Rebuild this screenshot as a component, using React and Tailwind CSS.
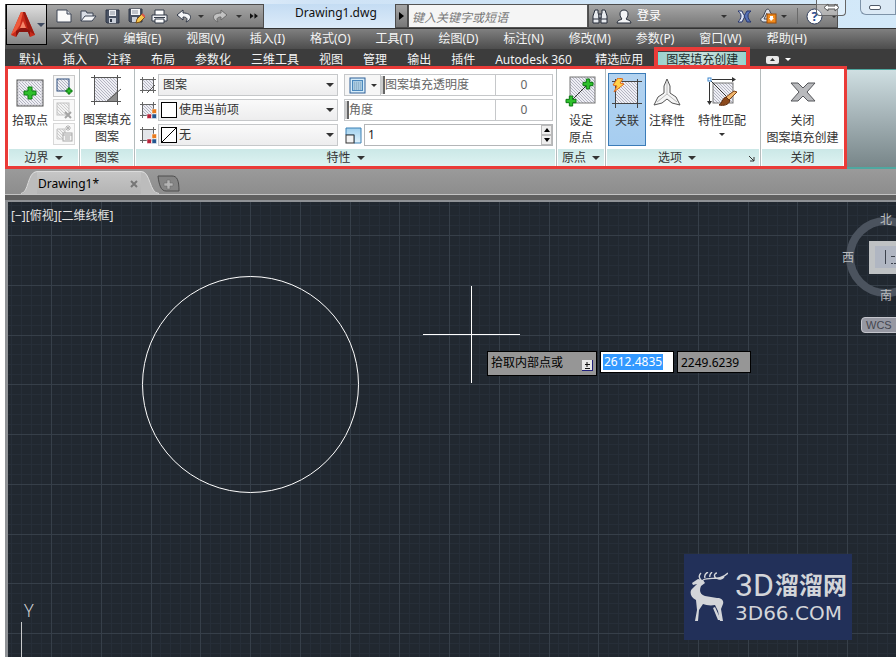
import React, { useState } from 'react';

const MENUS = [
  '文件(F)', '编辑(E)', '视图(V)', '插入(I)', '格式(O)', '工具(T)',
  '绘图(D)', '标注(N)', '修改(M)', '参数(P)', '窗口(W)', '帮助(H)',
];

const TABS = [
  '默认', '插入', '注释', '布局', '参数化', '三维工具',
  '视图', '管理', '输出', '插件', 'Autodesk 360', '精选应用',
];

// Grid spacing of the drawing area
const MAJOR = 49.75;

function Caret({ className = 'text-[#333]' }) {
  return (
    <svg width="8" height="4" viewBox="0 0 8 4" className={`shrink-0 ${className}`}>
      <path d="M0 0h8L4 4z" fill="currentColor" />
    </svg>
  );
}

function SmallCaret({ className = 'text-[#333]' }) {
  return (
    <svg width="6" height="3" viewBox="0 0 6 3" className={`shrink-0 ${className}`}>
      <path d="M0 0h6L3 3z" fill="currentColor" />
    </svg>
  );
}

function SharedDefs() {
  return (
    <svg className="absolute h-0 w-0" aria-hidden="true">
      <defs>
        <pattern id="hatch" width="3" height="3" patternUnits="userSpaceOnUse">
          <rect width="3" height="3" fill="#eeeef4" />
          <path d="M0 0l3 3M-1 2l2 2M2 -1l2 2" stroke="#9a9baa" strokeWidth="0.7" />
        </pattern>
        <pattern id="hatchLight" width="3" height="3" patternUnits="userSpaceOnUse">
          <rect width="3" height="3" fill="#f3f3f3" />
          <path d="M0 0l3 3" stroke="#c4c4c4" strokeWidth="0.8" />
        </pattern>
        <linearGradient id="sky" x1="0" y1="0" x2="0" y2="1">
          <stop offset="0" stopColor="#9fd0ee" />
          <stop offset="1" stopColor="#e2f3fc" />
        </linearGradient>
      </defs>
    </svg>
  );
}

function Plus({ x, y, size = 12 }) {
  const t = size / 3;
  return (
    <path
      transform={`translate(${x} ${y})`}
      d={`M${t} 0h${t}v${t}h${t}v${t}h${-t}v${t}h${-t}v${-t}h${-t}v${-t}h${t}z`}
      fill="#2fc02c"
      stroke="#0c7a12"
    />
  );
}

/* ---------- title bar ---------- */

function AppButton() {
  return (
    <button
      aria-label="应用程序菜单"
      className="absolute left-[1px] top-1 z-10 flex h-[41px] w-[41px] items-center gap-[2px] border border-black bg-linear-to-b from-[#dedede] via-[#b3b3b3] to-[#858585] pl-1"
    >
      <svg width="24" height="26" viewBox="0 0 24 26">
        <path d="M10 0h4l10 23-5 2-2-5H8l-3 5-5-2z" fill="#c92a1a" />
        <path d="M10 0h2L9 13 5 19l-5 4z" fill="#ee5a3c" />
        <path d="M12 0h2l10 23-7-5z" fill="#9c1a10" />
        <path d="M12 9l3 7H9z" fill="#f5876a" />
        <path d="M5 19l5-3h5l4 3v6l-2-5H8l-3 5z" fill="#8a140e" />
      </svg>
      <Caret className="text-[#3e4a60]" />
    </button>
  );
}

function QuickAccess() {
  return (
    <div className="flex h-6 w-[259px] shrink-0 items-center border border-[#4c4c4c] bg-linear-to-b from-[#a6a6a6] to-[#7b7b7b] pl-[50px] text-[#444]">
      <button aria-label="新建" className="mr-2">
        <svg width="16" height="14" viewBox="0 0 16 14">
          <path d="M1 1h10l4 4v8H1z" fill="#fafafa" stroke="#3c4454" />
          <path d="M11 1v4h4" fill="#d0d4dc" stroke="#3c4454" />
        </svg>
      </button>
      <button aria-label="打开" className="mr-2">
        <svg width="17" height="14" viewBox="0 0 17 14">
          <path d="M1 12V2h5l1 2h6v3" fill="#d9dde5" stroke="#3c4454" />
          <path d="M1 12l4-5h11l-4 5z" fill="#f5f6f8" stroke="#3c4454" />
        </svg>
      </button>
      <button aria-label="保存" className="mr-2">
        <svg width="15" height="15" viewBox="0 0 15 15">
          <path d="M1 1h13v13H2l-1-1z" fill="#4a5364" stroke="#2f3746" />
          <rect x="4" y="1" width="7" height="6" fill="#eceef2" />
          <path d="M5 3h5M5 5h5" stroke="#8c93a0" />
          <rect x="4" y="9" width="7" height="5" fill="#c9ced8" />
          <rect x="5" y="10" width="2" height="3" fill="#2f3746" />
        </svg>
      </button>
      <button aria-label="另存为" className="mr-[6px]">
        <svg width="17" height="16" viewBox="0 0 17 16">
          <path d="M1 1h13v13H2l-1-1z" fill="#4a5364" stroke="#2f3746" />
          <rect x="3" y="1" width="9" height="6" fill="#f4f5f7" />
          <path d="M4 3h6M4 5h6" stroke="#8c93a0" />
          <rect x="4" y="9" width="5" height="5" fill="#c9ced8" />
          <path d="M8 15l1-4 5-5 3 3-5 5z" fill="#f5c64a" stroke="#7a4d12" />
          <path d="M14 6l3 3" stroke="#d8584a" strokeWidth="2" />
        </svg>
      </button>
      <button aria-label="打印" className="mr-2">
        <svg width="17" height="15" viewBox="0 0 17 15">
          <path d="M4 6V1h9v5" fill="#fff" stroke="#333b49" />
          <path d="M1 6h15v6H1z" fill="#f0f1f4" stroke="#333b49" />
          <path d="M3 8.500h11" stroke="#333b49" />
          <path d="M4 10h9v4H4z" fill="#fff" stroke="#333b49" />
        </svg>
      </button>
      <button aria-label="放弃" className="mr-[6px]">
        <svg width="16" height="14" viewBox="0 0 16 14">
          <path d="M7 1L1 6l6 5V8c4 0 5 2 3 5 6-2 7-9-3-9z" fill="#f4f5f7" stroke="#2f3746" />
        </svg>
      </button>
      <SmallCaret />
      <button aria-label="重做" className="mx-2">
        <svg width="16" height="14" viewBox="0 0 16 14">
          <path d="M9 1l6 5-6 5V8c-4 0-5 2-3 5C0 11-1 4 9 4z" fill="#c2c2c2" stroke="#6a6a6a" />
        </svg>
      </button>
      <SmallCaret />
      <button aria-label="更多" className="ml-2">
        <svg width="8" height="6" viewBox="0 0 9 6">
          <path d="M0 0l4 3-4 3zM5 0l4 3-4 3z" fill="#111" />
        </svg>
      </button>
    </div>
  );
}

function InfoCenter() {
  return (
    <div className="flex h-6 w-[250px] shrink-0 items-center border border-[#4c4c4c] bg-linear-to-b from-[#a6a6a6] to-[#777] pl-[3px] text-[#444]">
      <button aria-label="搜索" className="mr-2">
        <svg width="16" height="15" viewBox="0 0 16 15">
          <path d="M3 1h3v3l1 2v8H1V7zM10 1h3l2 6v7H9V6l1-2z" fill="#e8eaee" stroke="#262d3a" />
          <path d="M7 5h2v4H7zM1 10h6M9 10h6" fill="#e8eaee" stroke="#262d3a" />
        </svg>
      </button>
      <button className="mr-[60px] flex items-center gap-[5px] text-xs text-white">
        <svg width="16" height="15" viewBox="0 0 16 15">
          <path d="M8 1c3 0 4 2 4 4S11 9 10 10c1 1 5 1 5 4H1c0-3 4-3 5-4C5 9 4 7 4 5s1-4 4-4z" fill="#f2f3f5" stroke="#262d3a" />
        </svg>
        登录
      </button>
      <SmallCaret />
      <button aria-label="Exchange" className="ml-[10px] mr-2">
        <svg width="15" height="13" viewBox="0 0 15 13">
          <path d="M1 1h4c1 3 2 4 3 5-1 2-2 4-3 6H1c2-2 3-4 3-6S3 3 1 1z" fill="#dfe6f6" stroke="#27376e" />
          <path d="M14 1h-4C9 3 8 4 7 6c1 2 2 4 3 6h4c-2-2-3-4-3-6s1-3 3-5z" fill="#5570b6" stroke="#27376e" />
        </svg>
      </button>
      <button aria-label="Autodesk 360" className="mr-1">
        <svg width="17" height="16" viewBox="0 0 17 16">
          <path d="M6 2c2-2 4 0 4 2l4 5v5H3c-3-1-3-4 0-5z" fill="#dfe3ea" stroke="#3c4454" />
          <path d="M7 5L4 11h3" fill="none" stroke="#3c4454" />
          <rect x="7" y="6" width="9" height="9" fill="#ef8a1d" stroke="#9c4c08" />
          <path d="M10 8h3v2h1l-3 3-2-3h1z" fill="#fff" />
        </svg>
      </button>
      <SmallCaret />
      <span className="ml-[10px] mr-2 h-4 w-px bg-[#6a6a6a]" />
      <button aria-label="帮助" className="mr-2">
        <svg width="17" height="17" viewBox="0 0 17 17">
          <circle cx="8.5" cy="8.5" r="7.5" fill="#fff" stroke="#33405c" />
          <text x="8.5" y="13" textAnchor="middle" fontSize="13" fontWeight="700" fill="#2a4f94">?</text>
        </svg>
      </button>
      <SmallCaret />
    </div>
  );
}

function TitleBar() {
  return (
    <header className="relative flex h-7 bg-linear-to-r from-white from-10% via-[#cfe3f6] via-35% to-[#d3e9f9] pt-1">
      <AppButton />
      <QuickAccess />
      <h1 className="min-w-0 flex-1 bg-linear-to-b from-[#c4dcf3] to-[#dcebf9] pl-[31px] text-xs leading-[17px] text-[#111]">Drawing1.dwg</h1>
      <button aria-label="展开搜索" className="flex h-6 w-[13px] items-center justify-center border border-[#4c4c4c] bg-linear-to-b from-[#a6a6a6] to-[#777]">
        <svg width="5" height="8" viewBox="0 0 5 8"><path d="M0 0l5 4-5 4z" fill="#000" /></svg>
      </button>
      <input
        aria-label="搜索"
        placeholder="键入关键字或短语"
        className="h-6 w-[180px] border border-[#555] bg-[#f5f5f5] px-[3px] pt-[2px] text-xs italic outline-none placeholder:text-[#777]"
      />
      <InfoCenter />
      <div className="flex w-[58px] shrink-0 justify-end">
        <button aria-label="最小化" className="-mt-1 flex h-[15px] w-9 items-center rounded-bl-md border border-r-0 border-t-0 border-[#7e93a8] bg-[#dbe9f5] pl-2">
          <span className="h-[5px] w-3 rounded-xs border border-[#505a68] bg-white" />
          <span className="ml-auto h-full w-px bg-[#7e93a8]" />
        </button>
      </div>
      <div className="absolute right-[50px] top-0 flex h-4 w-[30px] items-center justify-center rounded-b border border-t-0 border-[#666] bg-white/30">
        <svg width="17" height="9" viewBox="0 0 17 9">
          <path d="M1 4.500L5 1v2h7V1l4 3.500L12 8V6H5v2z" fill="#fff" stroke="#555" />
        </svg>
      </div>
    </header>
  );
}

function MenuBar() {
  return (
    <nav className="flex h-[21px] items-center gap-[25px] whitespace-nowrap border-t border-[#333] bg-linear-to-b from-[#808080] to-[#4d4d4d] pl-14 text-xs text-[#f4f4f4]">
      {MENUS.map((m) => <button key={m}>{m}</button>)}
    </nav>
  );
}

function RibbonTabs() {
  return (
    <nav className="relative flex h-[17px] items-end gap-5 whitespace-nowrap bg-[#3c3c3c] pl-[14px] text-xs leading-[12px] text-[#f4f4f4]">
      {TABS.map((t) => <button key={t} className={t === 'Autodesk 360' ? 'w-20 text-left' : ''}>{t}</button>)}
      <div className="relative -ml-[6px] h-[14px]">
        <button className="h-[14px] border-x-2 border-[#72e0d8] bg-linear-to-r from-[#9cd2cd] via-[#c6dfdc] to-[#9cd2cd] px-[7px] leading-[16px] text-[#1c2c2c]">图案填充创建</button>
        <span className="pointer-events-none absolute -inset-x-[3px] -bottom-[3px] -top-[5px] z-10 border-4 border-[#ea3b38]" />
      </div>
      <button aria-label="最小化功能区" className="-ml-px flex h-full items-center gap-[6px] pt-1">
        <svg width="13" height="8" viewBox="0 0 13 8">
          <rect width="13" height="8" rx="2" fill="#e8e8e8" />
          <path d="M4 5h5L6.500 2z" fill="#333" />
        </svg>
        <SmallCaret className="text-white" />
      </button>
    </nav>
  );
}

/* ---------- ribbon ---------- */

function Panel({ title, caret, launcher, className, children }) {
  return (
    <section className={`flex shrink-0 flex-col border-r border-[#b5bcbd] bg-white last:border-r-0 ${className}`}>
      <div className="h-20 px-1 pt-1">{children}</div>
      <h2 className={`relative mx-px flex h-[17px] items-center justify-center gap-[6px] bg-linear-to-b from-[#cbe8e7] to-[#def3f2] text-xs text-[#333] ${launcher ? 'pr-3' : ''}`}>
        {title}
        {caret && <Caret />}
        {launcher && (
          <svg width="6" height="6" viewBox="0 0 6 6" className="absolute right-1 top-[7px]">
            <path d="M0 0l5 5M5 1v4H1" stroke="#333" fill="none" />
          </svg>
        )}
      </h2>
    </section>
  );
}

function BoundaryPanel() {
  return (
    <Panel title="边界" caret className="w-[72px]">
      <div className="flex gap-[5px]">
        <button className="flex w-10 flex-col items-center gap-1 pt-[6px] text-xs text-[#333]">
          <svg width="28" height="28" viewBox="0 0 28 28">
            <rect x="1" y="1" width="26" height="26" fill="url(#hatch)" stroke="#555" />
            <rect x="2.500" y="2.500" width="23" height="23" fill="none" stroke="#d8d8de" />
            <Plus x={8} y={8} />
          </svg>
          <span className="whitespace-nowrap pt-[2px]">拾取点</span>
        </button>
        <div className="flex flex-col gap-[2px] pt-[2px]">
          <button aria-label="选择边界对象" className="flex h-[22px] w-[22px] items-center justify-center border border-[#c9c9c9] bg-[#f7f7f7]">
            <svg width="18" height="18" viewBox="0 0 18 18">
              <rect x="2" y="2" width="12" height="12" fill="url(#hatch)" stroke="#2d4d7d" />
              <Plus x={11} y={11} size={6} />
            </svg>
          </button>
          <button aria-label="删除边界对象" disabled className="flex h-[22px] w-[22px] items-center justify-center border border-[#d8d8d8] bg-[#f9f9f9]">
            <svg width="18" height="18" viewBox="0 0 18 18">
              <rect x="2" y="2" width="12" height="12" fill="url(#hatchLight)" stroke="#c2c2c2" />
              <path d="M10 11l6 6M16 11l-6 6" stroke="#a4a4a4" strokeWidth="2" />
            </svg>
          </button>
          <button aria-label="重新创建边界" disabled className="flex h-[22px] w-[22px] items-center justify-center border border-[#d8d8d8] bg-[#f9f9f9]">
            <svg width="18" height="18" viewBox="0 0 18 18">
              <path d="M2 4h8v10H2z" fill="url(#hatchLight)" stroke="#c2c2c2" />
              <path d="M13 0v6M10 3h6M11 1l4 4M15 1l-4 4" stroke="#b4b4b4" />
              <rect x="8" y="8" width="9" height="8" fill="#f5f5f5" stroke="#a8a8a8" />
              <path d="M8 10h9M10 12h5M10 14h5" stroke="#a8a8a8" />
            </svg>
          </button>
        </div>
      </div>
    </Panel>
  );
}

function PatternPanel() {
  return (
    <Panel title="图案" className="w-[55px]">
      <button className="-mx-1 flex w-[54px] flex-col items-center pt-[1px] text-xs leading-[17px] text-[#333]">
        <svg width="32" height="32" viewBox="0 0 32 32" className="mb-[5px]">
          <rect x="4" y="4" width="23" height="23" fill="url(#hatch)" />
          <path d="M26 17v10H16z" fill="#8e8e8e" />
          <path d="M0 3.500h30M3.500 1v30M0 27.500h30M26.500 1v30M15 28l15-13" stroke="#555" fill="none" />
        </svg>
        <span>图案填充</span>
        <span>图案</span>
      </button>
    </Panel>
  );
}

function RowIcon({ dots, plain }) {
  return (
    <svg width="17" height="17" viewBox="0 0 17 17" className="shrink-0">
      <rect x="3" y="3" width="11" height="11" fill={plain ? '#e4e6ea' : 'url(#hatch)'} />
      <path d="M0 2.500h16M2.500 0v16M0 13.500h16M13.500 0v16" stroke="#666" fill="none" />
      {!dots && <path d="M15 8l-8 8" stroke="#555" />}
      {dots && (
        <g stroke="#fff" strokeWidth="0.5">
          <rect x="12" y="7" width="4.500" height="4.500" fill="#e8791c" />
          <rect x="7" y="12" width="4.500" height="4.500" fill="#b8233a" />
          <rect x="12" y="12" width="4.500" height="4.500" fill="#23568f" />
        </g>
      )}
    </svg>
  );
}

function Combo({ label, value, options, icon, swatch }) {
  return (
    <div className="flex items-center gap-[1px]">
      {icon}
      <div className="relative flex h-[22px] w-[180px] items-center border border-[#c6c8ca] bg-linear-to-b from-[#fafafa] to-[#ededee] pl-[2px]">
        {swatch}
        <select aria-label={label} defaultValue={value} className="h-full min-w-0 flex-1 appearance-none bg-transparent px-[2px] text-xs text-[#333] outline-none">
          {options.map((o) => <option key={o}>{o}</option>)}
        </select>
        <Caret className="pointer-events-none absolute right-[3px] text-[#333]" />
      </div>
    </div>
  );
}

function SliderField({ label, max }) {
  const [value, setValue] = useState(0);
  return (
    <div className="flex h-[22px] min-w-0 flex-1 border border-[#c6c8ca] bg-white text-xs text-[#666]">
      <div className="relative flex-1 border-r border-[#c6c8ca]">
        <label htmlFor={label} className="pointer-events-none absolute inset-0 flex items-center pl-1">{label}</label>
        <input
          id={label}
          type="range"
          min="0"
          max={max}
          value={value}
          onChange={(e) => setValue(Number(e.target.value))}
          className="absolute inset-0 h-full w-full appearance-none bg-transparent [&::-webkit-slider-thumb]:h-[18px] [&::-webkit-slider-thumb]:w-1 [&::-webkit-slider-thumb]:appearance-none [&::-webkit-slider-thumb]:border-r-2 [&::-webkit-slider-thumb]:border-[#666] [&::-webkit-slider-thumb]:bg-[#ccc]"
        />
      </div>
      <input
        aria-label={`${label} 值`}
        value={value}
        onChange={(e) => setValue(Number(e.target.value) || 0)}
        className="w-14 bg-transparent text-center outline-none"
      />
    </div>
  );
}

function PropertiesPanel() {
  const [scale, setScale] = useState(1);
  return (
    <Panel title="特性" caret className="w-[422px]">
      <div className="flex gap-[6px] pl-px pt-px">
        <div className="flex flex-col gap-[3px]">
          <Combo label="图案填充类型" value="图案" options={['实体', '渐变色', '图案', '用户定义']} icon={<RowIcon />} />
          <Combo
            label="图案填充颜色"
            value="使用当前项"
            options={['使用当前项', 'ByLayer', 'ByBlock']}
            icon={<RowIcon dots />}
            swatch={<span className="h-4 w-4 border border-black bg-white" />}
          />
          <Combo
            label="背景色"
            value="无"
            options={['无', 'ByLayer']}
            icon={<RowIcon dots plain />}
            swatch={(
              <svg width="16" height="16" viewBox="0 0 16 16">
                <rect x="0.500" y="0.500" width="15" height="15" fill="#fff" stroke="#000" />
                <path d="M1 15L15 1" stroke="#000" />
              </svg>
            )}
          />
        </div>
        <div className="-mr-px flex min-w-0 flex-1 flex-col gap-[3px]">
          <div className="flex">
            <button aria-label="透明度来源" className="flex h-[22px] w-9 items-center justify-center gap-[5px] border border-r-0 border-[#c6c8ca] bg-[#f6f6f6]">
              <svg width="17" height="17" viewBox="0 0 17 17">
                <rect x="1" y="1" width="15" height="15" fill="#d5ecfa" stroke="#2e5f96" />
                <rect x="3.500" y="3.500" width="10" height="10" fill="#a9cbe2" stroke="#4b88bd" />
                <path d="M5 6h8M5 8h8M5 10h8M5 12h8" stroke="#7fa0b8" strokeDasharray="1 1" />
              </svg>
              <SmallCaret />
            </button>
            <SliderField label="图案填充透明度" max="90" />
          </div>
          <div className="flex"><SliderField label="角度" max="359" /></div>
          <div className="flex items-center gap-[2px]">
            <svg width="18" height="18" viewBox="0 0 18 18" className="shrink-0">
              <path d="M2 2h15v15h-7V9H2z" fill="url(#sky)" stroke="#3c80b4" />
              <rect x="2" y="9" width="8" height="8" fill="#f2f2f2" stroke="#333" />
            </svg>
            <div className="flex h-[22px] min-w-0 flex-1 border border-[#b4b6b8] bg-white">
              <input
                aria-label="填充图案比例"
                value={scale}
                onChange={(e) => setScale(e.target.value)}
                className="min-w-0 flex-1 px-[3px] text-xs text-[#222] outline-none"
              />
              <div className="flex shrink-0 flex-col">
                <button aria-label="增大" onClick={() => setScale(Number(scale) + 1)} className="flex h-[10px] w-[11px] items-center justify-center border border-[#bbb] bg-[#eee]">
                  <svg width="6" height="4" viewBox="0 0 6 4" className="shrink-0"><path d="M0 4h6L3 0z" /></svg>
                </button>
                <button aria-label="减小" onClick={() => setScale(Number(scale) - 1)} className="flex h-[10px] w-[11px] items-center justify-center border border-[#bbb] bg-[#eee]">
                  <svg width="6" height="4" viewBox="0 0 6 4" className="shrink-0"><path d="M0 0h6L3 4z" /></svg>
                </button>
              </div>
            </div>
          </div>
        </div>
      </div>
    </Panel>
  );
}

function OriginPanel() {
  return (
    <Panel title="原点" caret className="w-[49px]">
      <button className="flex w-10 flex-col items-center text-xs leading-[17px] text-[#333]">
        <svg width="32" height="32" viewBox="0 0 32 32" className="mb-[4px] mt-[3px]">
          <rect x="5" y="1" width="25" height="26" fill="url(#hatch)" stroke="#777" />
          <path d="M7 24L22 9" stroke="#333" />
          <Plus x={18} y={3} size={10} />
          <Plus x={1} y={20} size={10} />
        </svg>
        <span>设定</span>
        <span>原点</span>
      </button>
    </Panel>
  );
}

function OptionsPanel() {
  return (
    <Panel title="选项" caret launcher className="w-[155px]">
      <div className="-ml-[2px] flex text-xs text-[#333]">
        <button aria-pressed="true" className="flex h-[73px] w-[38px] flex-col items-center border border-[#3b7cb8] bg-linear-to-b from-[#b3d3f0] to-[#a6cdf0] pt-1">
          <svg width="30" height="30" viewBox="0 0 30 30">
            <rect x="4" y="4" width="22" height="21" fill="url(#hatch)" />
            <path d="M0 3.500h30M3.500 1v29M0 25.500h30M25.500 1v29" stroke="#444" fill="none" />
            <path d="M6 0l5 1-3 4 4 1-10 8 3-6-4-1z" fill="#ffd34a" stroke="#e0651a" />
          </svg>
          <span className="mt-[5px]">关联</span>
        </button>
        <button className="flex w-[42px] flex-col items-center pt-1">
          <svg width="28" height="30" viewBox="0 0 28 30">
            <path d="M14 2l3 7v7l6 4 4 8-8-2-5-4-5 4-8 2 4-8 6-4V9z" fill="#f6f6f6" stroke="#555" />
            <path d="M14 5v12M14 17l10 8M14 17L4 25" stroke="#bbb" />
          </svg>
          <span className="mt-[6px] whitespace-nowrap">注释性</span>
        </button>
        <button className="ml-[6px] flex w-14 flex-col items-center pt-1">
          <svg width="30" height="30" viewBox="0 0 30 30">
            <rect x="6" y="6" width="20" height="20" fill="url(#hatch)" stroke="#777" />
            <path d="M5 2.500h22M2.500 5v21M3 3l20 20" stroke="#333" fill="none" />
            <path d="M25 0l4 2.500-4 2.500zM0 24h5l-2.500 4z" fill="#333" />
            <rect x="1" y="1" width="3" height="3" fill="#fff" stroke="#3a86cf" />
            <path d="M19 20l8-6 3 1-8 8z" fill="#f0b56c" stroke="#7b4315" />
            <path d="M19 20l4 4c-2 4-6 5-11 4 3-1 3-7 7-8z" fill="#8c4a1d" stroke="#5c2b0c" />
          </svg>
          <span className="mt-[6px] whitespace-nowrap">特性匹配</span>
          <SmallCaret className="mt-1" />
        </button>
      </div>
    </Panel>
  );
}

function ClosePanel() {
  return (
    <Panel title="关闭" className="w-[83px]">
      <button className="flex w-full flex-col items-center text-xs leading-[17px] text-[#333]">
        <svg width="26" height="20" viewBox="0 0 26 20" className="mb-[10px] mt-[9px]">
          <path d="M1 1h7l5 5 5-5h7l-8 9 8 9h-7l-5-5-5 5H1l8-9z" fill="#b9babd" stroke="#55565a" />
        </svg>
        <span>关闭</span>
        <span className="whitespace-nowrap">图案填充创建</span>
      </button>
    </Panel>
  );
}

function Ribbon() {
  return (
    <div className="flex bg-[#3c3c3c]">
      <div className="flex shrink-0 border-3 border-[#ea3b38]">
        <BoundaryPanel />
        <PatternPanel />
        <PropertiesPanel />
        <OriginPanel />
        <OptionsPanel />
        <ClosePanel />
      </div>
      <div className="mt-[3px] flex-1 border-b-2 border-t border-[#4fa8a0] bg-linear-to-b from-[#cfdfe2] via-[#a3b1b5] to-[#788689]" />
    </div>
  );
}

/* ---------- document area ---------- */

function DocumentTabs() {
  return (
    <div className="flex h-[26px] items-end border-b border-[#c4c4c4] bg-linear-to-b from-[#9a9a9a] to-[#8d8d8d] pl-4">
      <svg width="16" height="23" viewBox="0 0 16 23">
        <path d="M0 23C8 23 6 1 16 0v23z" fill="#bcbcbc" />
        <path d="M0 22.500C8 22 6 1 16 0.500" fill="none" stroke="#dcdcdc" />
      </svg>
      <div className="flex h-[23px] w-[104px] items-center justify-between border-t border-[#dcdcdc] bg-linear-to-b from-[#c6c6c6] to-[#b4b4b4] pt-[2px]">
        <button className="pl-px text-xs text-black">Drawing1*</button>
        <button aria-label="关闭 Drawing1" className="pr-[3px]">
          <svg width="8" height="8" viewBox="0 0 8 8">
            <path d="M1 1l6 6M7 1L1 7" stroke="#777" strokeWidth="2" />
          </svg>
        </button>
      </div>
      <svg width="18" height="23" viewBox="0 0 18 23">
        <path d="M0 0c10 0 8 22 18 23H0z" fill="#bcbcbc" />
        <path d="M0 0.500c10 0 8 22 18 22" fill="none" stroke="#dcdcdc" />
      </svg>
      <button aria-label="新图形" className="-ml-[2px] mb-[2px]">
        <svg width="24" height="17" viewBox="0 0 24 17">
          <path d="M1 1h14c5 0 7 4 7 15H9C4 16 2 10 1 1z" fill="#858585" stroke="#4e4e4e" />
          <path d="M10 5h3v3h3v3h-3v3h-3v-3H7V8h3z" fill="#b4b4b4" stroke="#666" strokeWidth="0.5" />
        </svg>
      </button>
    </div>
  );
}

function GridLines() {
  const minor = [];
  const major = [];
  for (let i = -5; i < 260; i++) {
    const x = Math.round(43 + (i * MAJOR) / 5) + 0.5;
    const y = Math.round(33 + (i * MAJOR) / 5) + 0.5;
    (i % 5 === 0 ? major : minor).push(`M${x} 0V2000M0 ${y}H2600`);
  }
  return (
    <>
      <path d={minor.join('')} stroke="#262e38" fill="none" />
      <path d={major.join('')} stroke="#363f49" fill="none" />
    </>
  );
}

function ViewCube() {
  return (
    <div className="absolute left-[834px] top-[10px] h-[122px] w-[100px] text-xs text-[#b9bcbf]">
      <svg width="100" height="96" viewBox="0 0 100 96" className="absolute left-0 top-0">
        <circle cx="44" cy="45" r="36" fill="none" stroke="#4b535e" strokeWidth="8" />
        <rect x="27" y="29" width="34" height="33" fill="#bfc2c4" />
        <rect x="33" y="34" width="28" height="22" fill="#b0b6c2" />
        <path d="M43.500 38v14M49 44.500h4M49 51.500h2M52 51.500h2" stroke="#3c424d" fill="none" />
      </svg>
      <span className="absolute left-[38px] top-0">北</span>
      <span className="absolute left-0 top-[38px]">西</span>
      <span className="absolute left-[38px] top-[76px]">南</span>
      <button className="absolute left-[19px] top-[105px] h-4 w-14 rounded-sm border border-[#c4c5cc] bg-[#9698a2] pl-1 text-left font-['Liberation_Sans'] text-[11px] leading-[14px] text-[#44464f]">WCS</button>
    </div>
  );
}

function DynamicInput() {
  return (
    <div className="absolute left-[479px] top-[149px] flex items-start gap-[3px] text-xs text-black">
      <div className="flex h-[25px] w-[110px] items-center justify-between border border-black bg-[#969696] px-[3px]">
        <span className="pb-[2px]">拾取内部点或</span>
        <svg width="11" height="11" viewBox="0 0 11 11" className="mt-1">
          <rect width="11" height="11" fill="#20207a" />
          <rect width="10" height="10" fill="#e9e9e9" />
          <path d="M5 2v5M3 4.500h5M3 8.500h5" stroke="#111" />
        </svg>
      </div>
      <div className="flex h-[22px] w-[74px] border border-black bg-white p-[2px]">
        <input aria-label="X 坐标" defaultValue="2612.4835" className="h-4 w-[60px] bg-[#3399ff] px-px text-white outline-none" />
      </div>
      <input aria-label="Y 坐标" defaultValue="2249.6239" className="h-[22px] w-[74px] border border-black bg-[#969696] px-[3px] outline-none" />
    </div>
  );
}

function Watermark() {
  return (
    <div className="absolute left-[676px] top-[352px] flex h-[86px] w-[168px] items-center gap-[7px] whitespace-nowrap bg-[#223059] pl-[6px] text-[#d3d5d9]">
      <svg width="38" height="50" viewBox="0 0 38 50" className="shrink-0">
        <path d="M2 11l6-4 5 1 2 3-4 3c-2 5-1 8 4 10l12 2c5 0 7 3 6 6l-2 5 2 12h-3l-2-10-3-6c-5 1-9 0-12-1l-4 6-1 11H5l2-11-1-10C0 25-1 19 3 16l4-4-4 1z" fill="#d3d5d9" />
        <path d="M25 35l6 13h-3l-5-12z" fill="#d3d5d9" />
        <path d="M11 8c-2-2-3-4 0-7M13 8c7-4 16 2 25-7M15 6c-1-3 1-5 3-6M20 5c-1-2 1-4 2-5M26 6c-3-2-1-5 1-5M27 6c2 2 5 1 7-1" fill="none" stroke="#d3d5d9" strokeWidth="1.400" />
      </svg>
      <div>
        <div className="flex items-center gap-[1px]">
          <span className="font-['Roboto'] text-[32px] leading-8">3D</span>
          <span className="text-[24px] font-bold leading-8">溜溜网</span>
        </div>
        <div className="font-['DejaVu_Sans'] text-[20px] leading-6">3D66.COM</div>
      </div>
    </div>
  );
}

function DrawingArea() {
  return (
    <main className="relative flex-1 overflow-hidden border-l-3 border-t-2 border-[#8f9296] bg-[#212830]">
      <svg className="absolute inset-0 h-full w-full">
        <GridLines />
        <circle cx="242.500" cy="182.500" r="108" fill="none" stroke="#fff" />
        <path d="M463.500 84v97M415 132.500h97" stroke="#fff" />
        <path d="M13.500 420v200" stroke="#c8cacc" />
      </svg>
      <div className="absolute left-[3px] top-[6px] text-xs text-[#e2e2e2]">[−][俯视][二维线框]</div>
      <span className="absolute left-4 top-[398px] text-[18px] font-light leading-5 text-[#d0d2d4]">Y</span>
      <DynamicInput />
      <ViewCube />
      <Watermark />
    </main>
  );
}

export default function App() {
  return (
    <div className="flex min-h-screen flex-col overflow-hidden bg-white pl-[5px] font-['Noto_Sans','Noto_Sans_CJK_SC',sans-serif]">
      <SharedDefs />
      <TitleBar />
      <MenuBar />
      <RibbonTabs />
      <Ribbon />
      <DocumentTabs />
      <div className="h-[5px] bg-[#606060]" />
      <DrawingArea />
    </div>
  );
}
